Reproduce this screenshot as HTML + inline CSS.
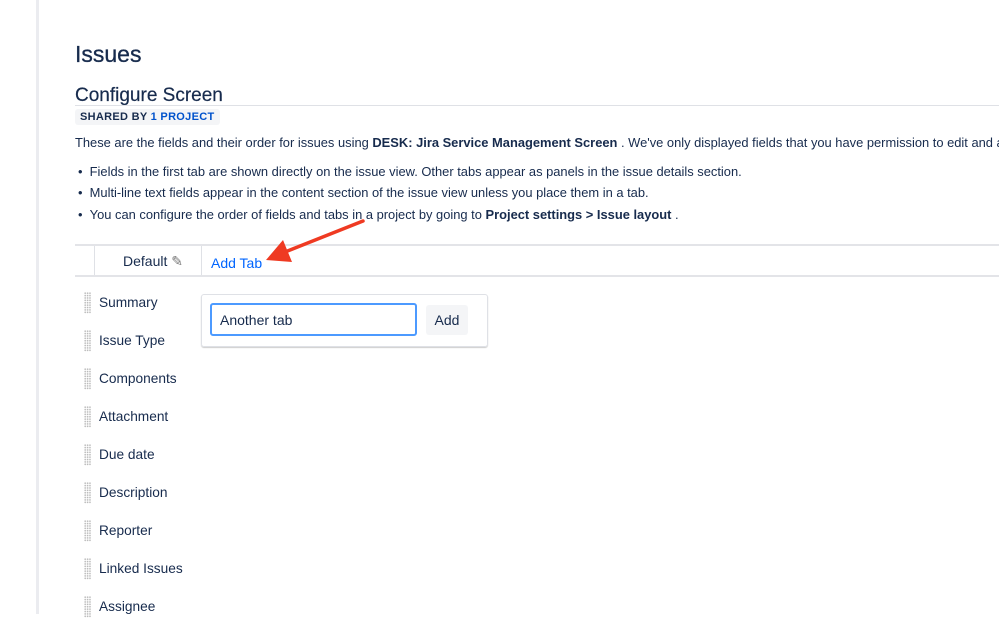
<!DOCTYPE html>
<html><head><meta charset="utf-8"><style>
body{margin:0;width:999px;height:614px;overflow:hidden;background:#fff;font-family:"Liberation Sans",sans-serif;color:#172b4d;position:relative}
.side{position:absolute;left:36px;top:0;width:3px;height:614px;background:#ebecf0}
.a{position:absolute;white-space:nowrap}
h1{position:absolute;left:75px;top:41px;margin:0;font-size:23px;font-weight:normal;-webkit-text-stroke:.3px #172b4d}
.h2{left:75px;top:85px;font-size:19px;-webkit-text-stroke:.2px #172b4d}
.line{position:absolute;left:75px;right:0;height:1px;background:#dfe1e6}
.lozenge{left:75px;top:109px;background:#f4f5f7;padding:2px 5px;font-size:11px;font-weight:bold;letter-spacing:.3px;border-radius:3px}
.t{font-size:12.9px}
.f{position:absolute;left:99px;font-size:13.7px}
.h{position:absolute;left:84px;width:7px;height:22px;background-image:radial-gradient(#bbb 0.8px,transparent 1px);background-size:2.4px 2.4px}
</style></head><body>
<div class="side"></div>
<h1>Issues</h1>
<div class="a h2">Configure Screen</div>
<div class="line" style="top:105px"></div>
<div class="a lozenge">SHARED BY <span style="color:#0052cc">1 PROJECT</span></div>
<div class="a t" style="left:75px;top:135px">These are the fields and their order for issues using <b>DESK: Jira Service Management Screen</b> . We've only displayed fields that you have permission to edit and a</div>
<div class="a t" style="left:78px;top:164px">•&nbsp;&nbsp;Fields in the first tab are shown directly on the issue view. Other tabs appear as panels in the issue details section.</div>
<div class="a t" style="left:78px;top:185px">•&nbsp;&nbsp;Multi-line text fields appear in the content section of the issue view unless you place them in a tab.</div>
<div class="a t" style="left:78px;top:207px">•&nbsp;&nbsp;You can configure the order of fields and tabs in a project by going to <b>Project settings &gt; Issue layout</b> .</div>
<div class="line" style="top:244px;height:2px;background:#e3e4e8"></div>
<div class="line" style="top:275px;height:2px;background:#e3e4e8"></div>
<div class="a" style="left:94px;top:246px;width:106px;height:29px;background:#fff;border-left:1px solid #dfe1e6;border-right:1px solid #dfe1e6"></div>
<div class="a" style="left:123px;top:253px;font-size:14px">Default <span style="color:#777">✎</span></div>
<div class="a" style="left:211px;top:255px;font-size:14px;color:#0065ff">Add Tab</div>
<div class="a" style="left:201px;top:294px;width:285px;height:51px;border:1px solid #dfe1e6;border-radius:3px;box-shadow:0 1px 1px #ccc"></div>
<div class="a" style="left:210px;top:303px;width:203px;height:29px;border:2px solid #4c9aff;border-radius:3px"></div>
<div class="a" style="left:220px;top:312px;font-size:14px">Another tab</div>
<div class="a" style="left:426px;top:305px;width:42px;height:30px;background:#f4f5f7;border-radius:3px;text-align:center;line-height:30px;font-size:14px">Add</div>
<div class="h" style="top:292px"></div><div class="f" style="top:295px">Summary</div>
<div class="h" style="top:330px"></div><div class="f" style="top:333px">Issue Type</div>
<div class="h" style="top:368px"></div><div class="f" style="top:371px">Components</div>
<div class="h" style="top:406px"></div><div class="f" style="top:409px">Attachment</div>
<div class="h" style="top:444px"></div><div class="f" style="top:447px">Due date</div>
<div class="h" style="top:482px"></div><div class="f" style="top:485px">Description</div>
<div class="h" style="top:520px"></div><div class="f" style="top:523px">Reporter</div>
<div class="h" style="top:558px"></div><div class="f" style="top:561px">Linked Issues</div>
<div class="h" style="top:596px"></div><div class="f" style="top:599px">Assignee</div>
<svg class="a" style="left:0;top:0" width="999" height="614"><line x1="363" y1="221" x2="285" y2="252" stroke="#ef3a22" stroke-width="3.5" stroke-linecap="round"/><polygon points="266,260 283,240 292,262" fill="#ef3a22"/></svg>
</body></html>
